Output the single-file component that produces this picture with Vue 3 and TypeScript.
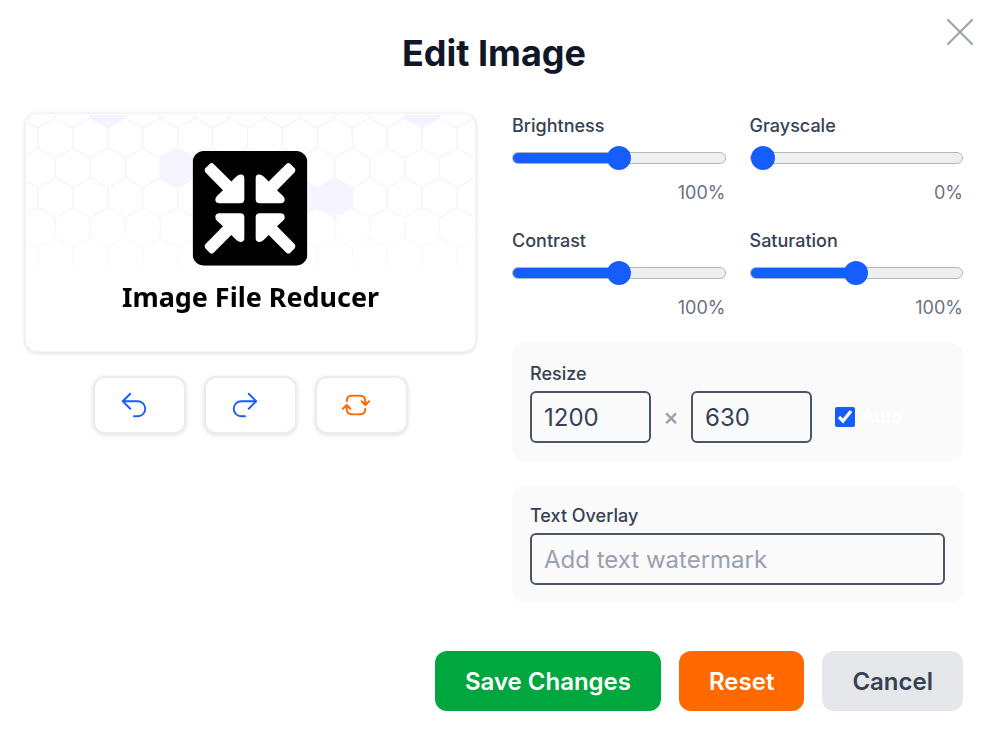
<script setup lang="ts">
import { computed, reactive, ref } from 'vue'

interface Adjustment {
  id: string
  label: string
  max: number
  initial: number
}

const adjustments: Adjustment[] = [
  { id: 'brightness', label: 'Brightness', max: 200, initial: 100 },
  { id: 'grayscale', label: 'Grayscale', max: 100, initial: 0 },
  { id: 'contrast', label: 'Contrast', max: 200, initial: 100 },
  { id: 'saturation', label: 'Saturation', max: 200, initial: 100 },
]

const values = reactive<Record<string, number>>({
  brightness: 100,
  grayscale: 0,
  contrast: 100,
  saturation: 100,
})

const width = ref('1200')
const height = ref('630')
const auto = ref(true)
const overlay = ref('')

const previewFilter = computed(
  () =>
    `brightness(${values.brightness}%) grayscale(${values.grayscale}%) contrast(${values.contrast}%) saturate(${values.saturation}%)`,
)

function reset(): void {
  for (const a of adjustments) values[a.id] = a.initial
  width.value = '1200'
  height.value = '630'
  auto.value = true
  overlay.value = ''
}

// Honeycomb backdrop of the preview artwork
const HEX_W = 35
const ROW_H = 30

function hexagon(col: number, row: number): string {
  const cx = 12 + HEX_W * col + (row % 2 === 0 ? 0 : HEX_W / 2) + HEX_W * 2
  const cy = -6 + ROW_H * row
  const h = HEX_W / 2
  return `M${cx} ${cy - 20}l${h} 10v20l${-h} 10l${-h} -10v-20z`
}

const outlines: string[] = []
for (let row = 0; row < 6; row++) {
  for (let col = -3; col < 12; col++) outlines.push(hexagon(col, row))
}
const outlinePath = outlines.join('')
const filledPath = [hexagon(0, 0), hexagon(9, 0), hexagon(2, 2), hexagon(5, 3), hexagon(6, 3)].join('')

const arrow =
  'M38 64Q33 58 38 52L51 39Q57 34 63 39L116 92L132 76Q139 70 146 71Q155 72 155 82V145Q155 157 143 157H80Q70 157 68 148Q67 140 73 135L91 118Z'
</script>

<template>
  <main class="dialog">
    <button class="close" type="button" aria-label="Close">
      <svg viewBox="4 4 16 16" aria-hidden="true"><path d="M6 18 18 6M6 6l12 12" /></svg>
    </button>
    <h1>Edit Image</h1>

    <div class="columns">
      <section class="left">
        <div class="preview">
          <svg class="art" viewBox="0 0 450 238" role="img" aria-label="Image File Reducer" :style="{ filter: previewFilter }">
            <defs>
              <linearGradient id="fade" x1="0" y1="0" x2="0" y2="1">
                <stop offset="0" stop-color="#fff" />
                <stop offset="0.5" stop-color="#fff" stop-opacity="0.9" />
                <stop offset="1" stop-color="#fff" stop-opacity="0" />
              </linearGradient>
              <mask id="fadeMask" maskUnits="userSpaceOnUse" x="0" y="0" width="450" height="238">
                <rect x="1" y="1" width="447" height="180" fill="url(#fade)" />
              </mask>
            </defs>
            <g mask="url(#fadeMask)">
              <path :d="outlinePath" class="hex-line" />
              <path :d="filledPath" class="hex-fill" />
            </g>
            <svg x="167" y="37" width="115" height="115" viewBox="0 0 344 344">
              <rect width="344" height="344" rx="34" />
              <g fill="#fff">
                <path :d="arrow" />
                <path :d="arrow" transform="matrix(-1 0 0 1 344 0)" />
                <path :d="arrow" transform="matrix(1 0 0 -1 0 344)" />
                <path :d="arrow" transform="matrix(-1 0 0 -1 344 344)" />
              </g>
            </svg>
            <text x="225" y="193" text-anchor="middle" class="art-title">Image File Reducer</text>
          </svg>
        </div>

        <div class="tools">
          <button type="button" class="tool" aria-label="Undo">
            <svg viewBox="0 0 24 24" aria-hidden="true"><path d="M9 15 3 9m0 0 6-6M3 9h12a6 6 0 0 1 0 12h-3" /></svg>
          </button>
          <button type="button" class="tool" aria-label="Redo">
            <svg viewBox="0 0 24 24" aria-hidden="true"><path d="m15 15 6-6m0 0-6-6m6 6H9a6 6 0 0 0 0 12h3" /></svg>
          </button>
          <button type="button" class="tool orange" aria-label="Rotate">
            <svg viewBox="0 0 24 24" aria-hidden="true">
              <path
                d="M19.5 12c0-1.232-.046-2.453-.138-3.662a4.006 4.006 0 0 0-3.7-3.7 48.678 48.678 0 0 0-7.324 0 4.006 4.006 0 0 0-3.7 3.7c-.017.22-.032.441-.046.662M19.5 12l3-3m-3 3-3-3m-12 3c0 1.232.046 2.453.138 3.662a4.006 4.006 0 0 0 3.7 3.7 48.656 48.656 0 0 0 7.324 0 4.006 4.006 0 0 0 3.7-3.7c.017-.22.032-.441.046-.662M4.5 12l3 3m-3-3-3 3"
              />
            </svg>
          </button>
        </div>
      </section>

      <section class="right">
        <div class="sliders">
          <div v-for="a in adjustments" :key="a.id" class="slider">
            <label :for="a.id">{{ a.label }}</label>
            <input
              :id="a.id"
              v-model.number="values[a.id]"
              type="range"
              min="0"
              :max="a.max"
              :style="{ '--fill': (values[a.id] / a.max) * 100 + '%' }"
            />
            <output :for="a.id">{{ values[a.id] }}%</output>
          </div>
        </div>

        <div class="panel">
          <label for="width">Resize</label>
          <div class="size-row">
            <input id="width" v-model="width" class="field size" type="text" inputmode="numeric" />
            <span class="times">×</span>
            <input v-model="height" class="field size" type="text" inputmode="numeric" aria-label="Height" />
            <label class="auto">
              <input v-model="auto" type="checkbox" />
              <span>Auto</span>
            </label>
          </div>
        </div>

        <div class="panel">
          <label for="overlay">Text Overlay</label>
          <input id="overlay" v-model="overlay" class="field" type="text" placeholder="Add text watermark" />
        </div>
      </section>
    </div>

    <footer class="actions">
      <button type="button" class="action save">Save Changes</button>
      <button type="button" class="action reset" @click="reset">Reset</button>
      <button type="button" class="action cancel">Cancel</button>
    </footer>
  </main>
</template>

<style>
body {
  margin: 0;
  background: #fff;
}
</style>

<style scoped>
* {
  box-sizing: border-box;
}

.dialog {
  position: relative;
  padding: 29px 37px 35px 25px;
  font-family: Inter, 'Liberation Sans', sans-serif;
  color: #364153;
}

button,
input {
  font: inherit;
  color: inherit;
  margin: 0;
}

button {
  cursor: pointer;
}

h1 {
  margin: 0 0 36px;
  font-size: 36px;
  line-height: 48px;
  font-weight: 700;
  text-align: center;
  color: #101828;
}

.close {
  position: absolute;
  top: 16px;
  right: 24px;
  width: 32px;
  height: 32px;
  padding: 0;
  border: 0;
  background: none;
  color: #99a1af;
}

.close svg {
  display: block;
  width: 32px;
  height: 32px;
}

svg {
  flex: none;
}

.close path,
.tool path {
  fill: none;
  stroke: currentColor;
  stroke-width: 1.5;
  stroke-linecap: round;
  stroke-linejoin: round;
}

.close path {
  stroke-width: 1;
}

.columns {
  display: grid;
  grid-template-columns: 1fr 1fr;
  gap: 36px;
  align-items: start;
}

.preview {
  overflow: hidden;
  border: 1px solid #f3f4f6;
  border-radius: 12px;
  background: #fff;
  box-shadow: 0 1px 4px rgba(0, 0, 0, 0.14);
}

.art {
  display: block;
  width: 100%;
}

.hex-line {
  fill: none;
  stroke: #f3f1fe;
  stroke-width: 1;
}

.hex-fill {
  fill: #f5f3ff;
}

.art-title {
  font-family: 'Noto Sans', sans-serif;
  font-size: 27px;
  font-weight: 700;
  fill: #000;
}

.tools {
  display: flex;
  justify-content: center;
  gap: 18px;
  margin-top: 24px;
}

.tool {
  display: flex;
  align-items: center;
  width: 93px;
  height: 58px;
  padding: 0 24px;
  border: 2px solid #eaecef;
  border-radius: 12px;
  background: #fff;
  color: #155dfc;
  box-shadow: 0 1px 4px rgba(0, 0, 0, 0.12);
}

.tool svg {
  width: 30px;
  height: 30px;
}

.tool.orange {
  color: #ff6900;
}

.right {
  display: grid;
  gap: 24px;
}

.sliders {
  display: grid;
  grid-template-columns: 1fr 1fr;
  gap: 24px;
}

.slider {
  display: flex;
  flex-direction: column;
}

label {
  display: block;
  font-size: 18px;
  line-height: 26px;
  font-weight: 500;
}

.slider input {
  appearance: none;
  width: 100%;
  height: 24px;
  margin: 7px 0 12px;
  background: none;
}

.slider input::-webkit-slider-runnable-track {
  height: 12px;
  border: 1px solid #b2b8b8;
  border-radius: 6px;
  background: linear-gradient(to right, #155dfc var(--fill), #efefef var(--fill));
}

.slider input::-webkit-slider-thumb {
  appearance: none;
  width: 24px;
  height: 24px;
  margin-top: -7px;
  border: 0;
  border-radius: 50%;
  background: #155dfc;
}

.slider output {
  font-size: 18px;
  line-height: 22px;
  text-align: right;
  color: #6a7282;
}

.panel {
  padding: 18px;
  border-radius: 12px;
  background: #fafafa;
}

.panel > label {
  margin-bottom: 4px;
}

.field {
  display: block;
  width: 100%;
  height: 52px;
  padding: 0 12px;
  border: 2px solid #4a5565;
  border-radius: 6px;
  background: transparent;
  font-size: 24px;
}

.field::placeholder {
  color: #99a1af;
  opacity: 1;
}

.size-row {
  display: flex;
  align-items: center;
}

.size {
  width: 121px;
}

.times {
  width: 40px;
  text-align: center;
  font-size: 24px;
  line-height: 28px;
  font-weight: 500;
  color: #99a1af;
}

.auto {
  display: flex;
  align-items: center;
  gap: 7px;
  margin-left: 23px;
  color: #fff;
}

.auto input {
  width: 20px;
  height: 20px;
  accent-color: #155dfc;
}

.actions {
  display: flex;
  justify-content: flex-end;
  gap: 18px;
  margin-top: 48px;
}

.action {
  height: 60px;
  padding: 0 30px;
  border: 0;
  border-radius: 12px;
  font-size: 24px;
  font-weight: 600;
}

.save {
  background: #00a63e;
  color: #fff;
}

.reset {
  background: #ff6900;
  color: #fff;
}

.cancel {
  background: #e5e7eb;
  color: #364153;
}
</style>
